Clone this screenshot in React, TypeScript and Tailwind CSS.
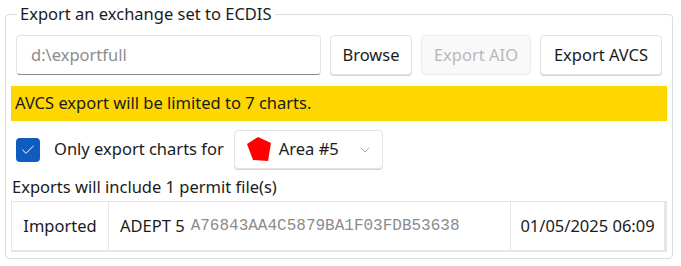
import { Check, ChevronDown } from 'lucide-react';

const font = "font-['Noto_Sans','Open_Sans',sans-serif]";

function Button({ label, width, disabled }: { label: string; width: string; disabled?: boolean }) {
  return (
    <button
      className={
        disabled
          ? `h-10 ${width} rounded-[4px] border border-[#ececec] bg-[#f9f9f9] text-[#b8b8b8]`
          : `h-10 ${width} rounded-[4px] border border-[#e3e3e3] bg-white text-[#1b1b1b] shadow-[0_1px_0_#d4d4d4]`
      }
    >
      {label}
    </button>
  );
}

export default function App() {
  return (
    <div className={`h-[266px] w-[681px] bg-white pt-[3px] pl-[5px] pr-[8px] text-[16.5px] text-[#1b1b1b] ${font}`}>
      <fieldset className="rounded-[4px] border border-[#d8dee6] px-[5px] pb-[6px]">
        {/* Legend sits on the top border */}
        <legend className="ml-[6px] px-[3px] leading-[22px]">
          Export an exchange set to ECDIS
        </legend>

        {/* Path + actions */}
        <div className="mt-[10px] flex items-center gap-[9px] px-[5px]">
          <div className="flex h-10 w-[305px] items-center rounded-[4px] border border-[#e3e3e3] border-b-[#8a8a8a] pl-[14px] text-[#8d8d8d]">
            d:\exportfull
          </div>
          <Button label="Browse" width="w-[82px]" />
          <Button label="Export AIO" width="w-[110px]" disabled />
          <Button label="Export AVCS" width="w-[122px]" />
        </div>

        {/* Warning */}
        <div className="mt-[11px] flex h-[35px] items-center bg-[#ffd700] px-[4px]">
          AVCS export will be limited to 7 charts.
        </div>

        {/* Area filter */}
        <div className="mt-[9px] flex items-center px-[5px]">
          <span className="flex h-6 w-6 items-center justify-center rounded-[4px] bg-[#0f5cbf]">
            <Check className="h-4 w-4 text-white" strokeWidth={1.5} />
          </span>
          <span className="ml-[14px]">Only export charts for</span>
          <div className="ml-[10px] flex h-[39px] w-[149px] items-center rounded-[4px] border border-[#e3e3e3] pl-[12px] shadow-[0_1px_0_#d4d4d4]">
            <svg width="25" height="25" viewBox="0 0 25 25" className="shrink-0">
              <polygon points="11,0 24,6 21,24 6,23 0,7" fill="#ff0000" />
            </svg>
            <span className="ml-[7px]">Area #5</span>
            <ChevronDown className="ml-auto mr-[9px] h-4 w-4 text-[#9a9a9a]" strokeWidth={1.25} />
          </div>
        </div>

        <div className="mt-[6px] mb-[2px] pl-[1px] leading-[24px]">Exports will include 1 permit file(s)</div>

        {/* Permit table */}
        <div className="border border-b-2 border-[#e6e6e6]">
          <div className="flex h-[48px] items-center">
            <div className="flex h-full w-[97px] items-center justify-center border-r border-[#e6e6e6]">
              Imported
            </div>
            <div className="flex h-full w-[402px] items-center border-r border-[#e6e6e6] pl-[11px]">
              ADEPT 5
              <span className="ml-[6px] font-['Liberation_Mono',monospace] text-[16px] text-[#8c8c8c]">
                A76843AA4C5879BA1F03FDB53638
              </span>
            </div>
            <div className="flex h-full flex-1 items-center justify-center border-r-2 border-[#e6e6e6]">
              01/05/2025 06:09
            </div>
          </div>
        </div>
      </fieldset>
    </div>
  );
}
